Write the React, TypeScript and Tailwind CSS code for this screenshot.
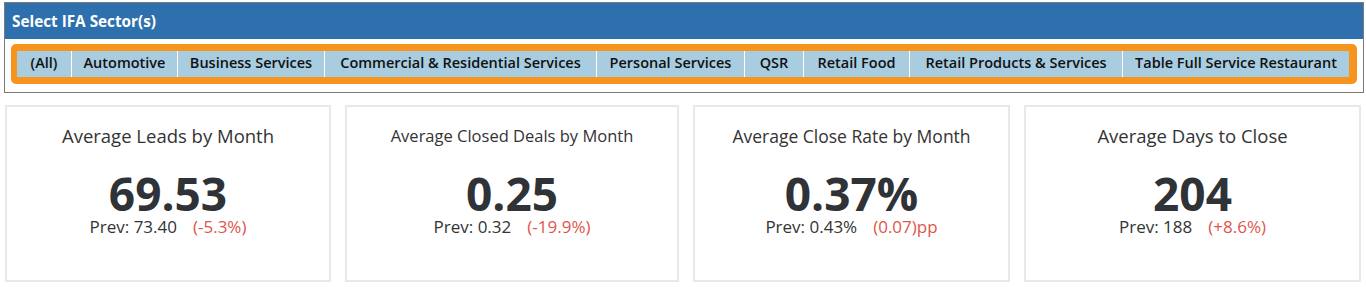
const sectors = [
  { label: "(All)", w: "w-[55px]" },
  { label: "Automotive", w: "w-[106px]" },
  { label: "Business Services", w: "w-[147px]" },
  { label: "Commercial & Residential Services", w: "w-[272px]" },
  { label: "Personal Services", w: "w-[148px]" },
  { label: "QSR", w: "w-[59px]" },
  { label: "Retail Food", w: "w-[106px]" },
  { label: "Retail Products & Services", w: "w-[213px]" },
  { label: "Table Full Service Restaurant", w: "w-[226px]" },
];

const cards = [
  { title: "Average Leads by Month", size: "text-[18.5px]", value: "69.53", prev: "Prev: 73.40", delta: "(-5.3%)", w: "w-[326px]" },
  { title: "Average Closed Deals by Month", size: "text-[16.5px]", value: "0.25", prev: "Prev: 0.32", delta: "(-19.9%)", w: "w-[334px]" },
  { title: "Average Close Rate by Month", size: "text-[17.5px]", value: "0.37%", prev: "Prev: 0.43%", delta: "(0.07)pp", w: "w-[317px]" },
  { title: "Average Days to Close", size: "text-[18.5px]", value: "204", prev: "Prev: 188", delta: "(+8.6%)", w: "w-[337px]" },
];

export default function App() {
  return (
    <div className="w-[1366px] h-[287px] bg-white overflow-hidden font-['Open_Sans',sans-serif]">
      <div className="ml-[4px] mt-[2px] w-[1360px] h-[91px] border border-[#7a7a7a]">
        <div className="h-[36px] bg-[#2e70ad] flex items-center px-[7px]">
          <span className="text-white text-[15.3px] font-bold">Select IFA Sector(s)</span>
        </div>
        <div className="ml-[6px] mt-[5px] w-[1346px] h-[40px] bg-[#f7941d] rounded-[5px] pl-[6px] pt-[7px]">
          <div className="flex h-[26px]">
            {sectors.map((s, i) => (
              <div
                key={s.label}
                className={`${s.w} h-full bg-[#a8cce0] flex items-center justify-center pb-[3px] text-[14.5px] font-semibold text-[#111] whitespace-nowrap ${i < sectors.length - 1 ? "border-r border-white" : ""}`}
              >
                {s.label}
              </div>
            ))}
          </div>
        </div>
      </div>

      <div className="flex gap-[14px] ml-[5px] mt-[12px]">
        {cards.map((c) => (
          <div key={c.title} className={`${c.w} h-[177px] border-2 border-[#e8e8e8] flex flex-col items-center text-[#333]`}>
            <div className={`${c.size} mt-[17px] leading-[24px]`}>{c.title}</div>
            <div className="text-[46px] font-bold leading-[36px] mt-[27px] text-[#2f3236]">{c.value}</div>
            <div className="text-[17px] leading-[20px] mt-[6px] flex gap-[16px]">
              <span>{c.prev}</span>
              <span className="text-[#e0554b]">{c.delta}</span>
            </div>
          </div>
        ))}
      </div>
    </div>
  );
}
